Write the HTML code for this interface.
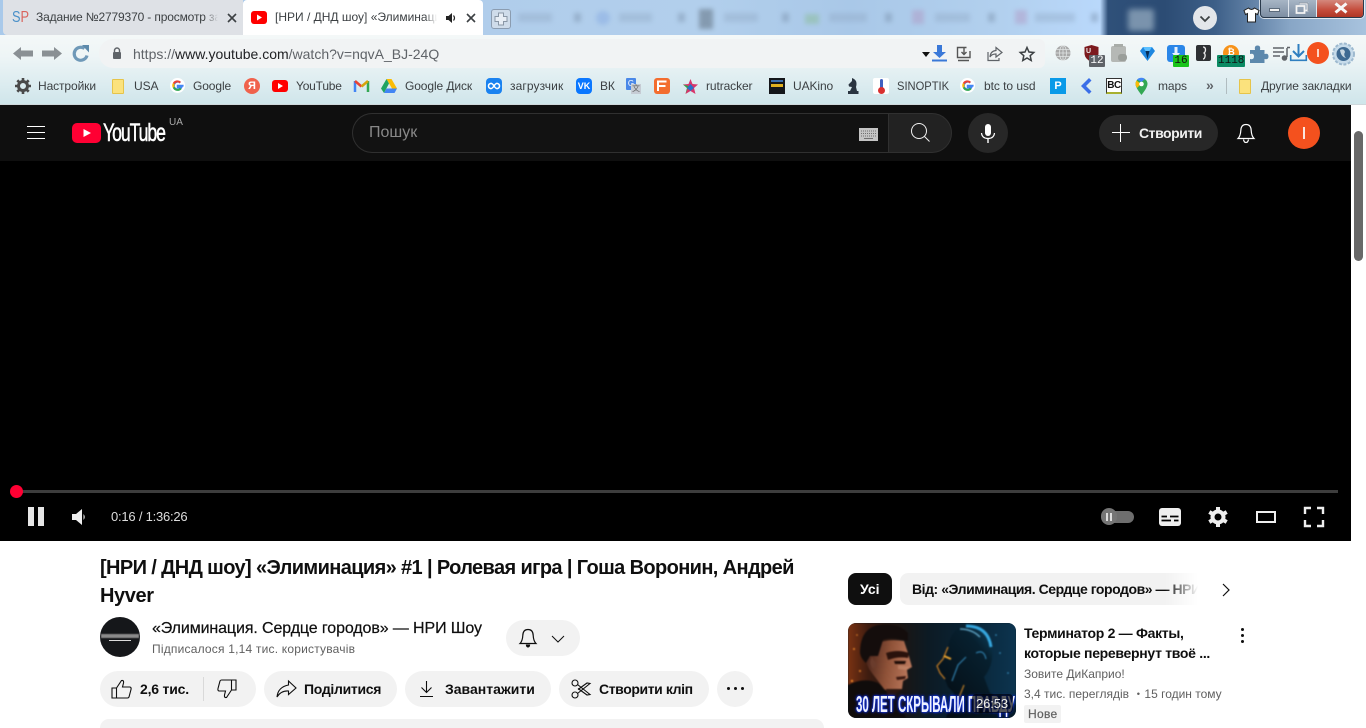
<!DOCTYPE html>
<html lang="ru"><head><meta charset="utf-8"><title>YouTube</title>
<style>
*{box-sizing:border-box}
html,body{margin:0;padding:0;width:1366px;height:728px;overflow:hidden;background:#fff;font-family:"Liberation Sans","Noto Sans CJK SC",sans-serif}
body{position:relative}
.a{position:absolute}
.t{position:absolute;white-space:nowrap}
svg{position:absolute;overflow:visible}
.bm{position:absolute;top:79px;font-size:12px;color:#3c4043;white-space:nowrap;line-height:14px;letter-spacing:-.1px}
.ic{position:absolute;top:78px;width:16px;height:16px}
.pill{position:absolute;background:#f2f2f2;border-radius:18px;height:36px;top:671px}
.lbl{position:absolute;top:681px;font-size:14px;font-weight:bold;color:#0f0f0f;white-space:nowrap;line-height:16px;letter-spacing:-.1px}
</style></head><body>

<!-- tab strip -->
<div class="a" style="left:0;top:0;width:1366px;height:35px;background:linear-gradient(90deg,#a9c9ea 0,#b0cdeb 480px,#b2cfec 700px,#a9c8e8 850px,#b2d0ee 1000px,#b9d8fb 1100px,#2f5079 1108px,#2c4c74 1165px,#3d5f88 1215px,#88a6c6 1290px,#a8c3de 1366px)"></div>
<div class="a" style="left:510px;top:9px;width:600px;height:18px;filter:blur(2.500px);opacity:.38">
 <div class="a" style="left:8px;top:4px;width:34px;height:9px;background:#8ea6c2"></div>
 <div class="a" style="left:64px;top:4px;width:7px;height:9px;background:#6e839d"></div>
 <div class="a" style="left:86px;top:2px;width:14px;height:14px;background:#7aa0e0;border-radius:7px"></div>
 <div class="a" style="left:109px;top:4px;width:33px;height:9px;background:#8ea6c2"></div>
 <div class="a" style="left:168px;top:4px;width:7px;height:9px;background:#6e839d"></div>
 <div class="a" style="left:189px;top:0;width:14px;height:20px;background:#3c4650"></div>
 <div class="a" style="left:214px;top:4px;width:34px;height:9px;background:#8ea6c2"></div>
 <div class="a" style="left:272px;top:4px;width:7px;height:9px;background:#6e839d"></div>
 <div class="a" style="left:295px;top:5px;width:14px;height:10px;background:#7fb87a"></div>
 <div class="a" style="left:319px;top:4px;width:38px;height:9px;background:#8ea6c2"></div>
 <div class="a" style="left:375px;top:4px;width:7px;height:9px;background:#6e839d"></div>
 <div class="a" style="left:402px;top:1px;width:12px;height:14px;background:#b08ab8"></div>
 <div class="a" style="left:425px;top:4px;width:35px;height:9px;background:#8ea6c2"></div>
 <div class="a" style="left:478px;top:4px;width:7px;height:9px;background:#6e839d"></div>
 <div class="a" style="left:505px;top:1px;width:12px;height:14px;background:#b08ab8"></div>
 <div class="a" style="left:525px;top:4px;width:40px;height:9px;background:#8ea6c2"></div>
 <div class="a" style="left:581px;top:4px;width:7px;height:9px;background:#6e839d"></div>
</div>
<div class="a" style="left:1128px;top:9px;width:26px;height:22px;background:#7a93ad;filter:blur(3px);border-radius:3px"></div>

<!-- tab 1 -->
<div class="a" style="left:3px;top:0;width:240px;height:35px;background:#dee1e6;border-radius:0 0 0 4px;overflow:hidden">
 <div class="t" style="left:9px;top:9px;font-size:16px;line-height:18px;color:#4a90c8;transform:scaleX(.8);transform-origin:0 0">S<span style="color:#d9635c">P</span></div>
 <div class="t" style="left:33px;top:10px;font-size:12px;line-height:15px;color:#3c4043;width:184px;overflow:hidden;letter-spacing:-.15px;-webkit-mask-image:linear-gradient(90deg,#000 168px,transparent 182px);mask-image:linear-gradient(90deg,#000 168px,transparent 182px)">Задание №2779370 - просмотр задания</div>
 <svg style="left:224px;top:13px" width="10" height="10" viewBox="0 0 10 10"><path d="M1 1 9 9M9 1 1 9" stroke="#3c4043" stroke-width="1.600"/></svg>
</div>
<!-- tab 2 -->
<div class="a" style="left:243px;top:0;width:240px;height:35px;background:#fff;border-radius:4px 4px 0 0;overflow:hidden">
 <div class="a" style="left:8px;top:11px;width:16px;height:13px;background:#f00;border-radius:3px"></div>
 <svg style="left:8px;top:11px" width="16" height="13"><path d="M6 3.500 11 6.500 6 9.500z" fill="#fff"/></svg>
 <div class="t" style="left:32px;top:10px;font-size:12px;line-height:15px;color:#3c4043;width:162px;overflow:hidden;-webkit-mask-image:linear-gradient(90deg,#000 150px,transparent 162px);mask-image:linear-gradient(90deg,#000 150px,transparent 162px)">[НРИ / ДНД шоу] «Элиминация» #1</div>
 <svg style="left:202px;top:12px" width="12" height="12" viewBox="0 0 12 12"><path d="M1 4H3.500L7 1V11L3.500 8H1z" fill="#222"/><path d="M8.500 3.500Q10.500 6 8.500 8.500" stroke="#222" fill="none" stroke-width="1.200"/></svg>
 <svg style="left:223px;top:13px" width="10" height="10" viewBox="0 0 10 10"><path d="M1 1 9 9M9 1 1 9" stroke="#3c4043" stroke-width="1.600"/></svg>
</div>
<!-- new tab -->
<div class="a" style="left:491px;top:9px;width:20px;height:20px;background:#cfdcea;border:1px solid #8b9cb0;border-radius:3px"></div>
<svg style="left:491px;top:9px" width="20" height="20"><path d="M7.500 4H12.500V7.500H16V12.500H12.500V16H7.500V12.500H4V7.500H7.500z" fill="#e8eef5" stroke="#8a97a6"/></svg>

<!-- window buttons -->
<div class="a" style="left:1260px;top:-4px;width:104px;height:22px;border:1px solid #2a3a4c;border-radius:0 0 4px 4px;background:linear-gradient(#aebccb,#7d8ea3);box-shadow:0 0 0 1px rgba(255,255,255,.7);overflow:hidden">
 <div class="a" style="left:56px;top:0;width:47px;height:22px;background:linear-gradient(#d99a90,#c44b3a 60%,#a8301f)"></div>
 <div class="a" style="left:27px;top:0;width:1px;height:22px;background:#dfe6ee"></div>
 <div class="a" style="left:55px;top:0;width:1px;height:22px;background:#dfe6ee"></div>
</div>
<div class="a" style="left:1269px;top:8px;width:11px;height:4px;background:#f2f2f2;border:1px solid #5c6b7c"></div>
<svg style="left:1295px;top:2px" width="14" height="12"><path d="M4.500 1.500H12.500V8.500H10.500M1.500 4H9.500V11H1.500z" fill="none" stroke="#f4f4f4" stroke-width="1.800"/><path d="M4 1H13V9" fill="none" stroke="#45566a" stroke-width=".5"/></svg>
<svg style="left:1334px;top:3px" width="14" height="10"><path d="M1.500 .5 12.500 9.500M12.500 .5 1.500 9.500" stroke="#f7f7f7" stroke-width="3"/></svg>
<!-- shirt -->
<svg style="left:1243px;top:7px" width="17" height="16" viewBox="0 0 17 16"><path d="M5.500 1 1 3.500 2.500 7.500 4.500 6.500V15H12.500V6.500L14.500 7.500 16 3.500 11.500 1Q8.500 4 5.500 1z" fill="#fff" stroke="#222" stroke-width="1"/></svg>
<!-- tab search -->
<div class="a" style="left:1193px;top:6px;width:24px;height:24px;border-radius:12px;background:#e3e6ea"></div>
<svg style="left:1199px;top:15px" width="12" height="8"><path d="M1.500 1.500 6 6 10.500 1.500" fill="none" stroke="#3c4043" stroke-width="1.800"/></svg>

<!-- toolbar -->
<div class="a" style="left:0;top:35px;width:1366px;height:70px;background:linear-gradient(#f4f8f8 0,#eef5f6 30%,#dcecf0 70%,#cfe5ea 100%)"></div>
<div class="a" style="left:0;top:104px;width:1366px;height:1px;background:#cfd8dc"></div>
<div class="a" style="left:99px;top:39px;width:946px;height:29px;background:#f1f3f4;border-radius:14px 6px 6px 14px"></div>
<svg style="left:13px;top:46px" width="20" height="15"><path d="M0 7.500 8 1V4.500H20V10.500H8V14z" fill="#8a9094"/></svg>
<svg style="left:42px;top:46px" width="20" height="15"><path d="M20 7.500 12 1V4.500H0V10.500H12V14z" fill="#8a9094"/></svg>
<svg style="left:72px;top:45px" width="18" height="18" viewBox="0 0 18 18"><path d="M15 10.500A6.500 6.500 0 1 1 12.500 3.500" fill="none" stroke="#6f99b8" stroke-width="3.200"/><path d="M10 0H17V7.500z" fill="#5d8aab"/></svg>
<svg style="left:112px;top:47px" width="10" height="12"><path d="M2.500 5V3.500a2.500 2.500 0 0 1 5 0V5" fill="none" stroke="#5f6368" stroke-width="1.400"/><rect x="1" y="5" width="8" height="7" rx="1" fill="#5f6368"/></svg>
<div class="t" style="left:133px;top:46px;font-size:14px;line-height:16px;color:#5f6368">https://<span style="color:#202124">www.youtube.com</span>/watch?v=nqvA_BJ-24Q</div>

<!-- address icons -->
<svg style="left:922px;top:52px" width="8" height="5"><path d="M0 0H8L4 5z" fill="#111"/></svg>
<svg style="left:931px;top:45px" width="18" height="17" viewBox="0 0 18 17"><path d="M6 0H11V7H15L8.500 13 2 7H6z" fill="#3a78d8"/><path d="M1 15.500H16" stroke="#3a78d8" stroke-width="2"/></svg>
<svg style="left:956px;top:46px" width="16" height="16" viewBox="0 0 16 16"><path d="M10.500 1.500H1.500V11.500H14V5" fill="none" stroke="#555" stroke-width="1.400"/><path d="M8 2V8M5.500 6 8 8.500 10.500 6" fill="none" stroke="#555" stroke-width="1.400"/><path d="M2 14.500H13" stroke="#555" stroke-width="1.500"/></svg>
<svg style="left:987px;top:46px" width="16" height="16" viewBox="0 0 16 16"><path d="M9 1.500 15 6.500 9 11V8Q4.500 8 3 11 3.500 5 9 4.500z" fill="none" stroke="#5f6368" stroke-width="1.200"/><path d="M1 6V14.500H12V12" fill="none" stroke="#5f6368" stroke-width="1.200"/></svg>
<svg style="left:1019px;top:46px" width="16" height="16" viewBox="0 0 16 16"><path d="M8 1.500 10 6 14.800 6.500 11.200 9.700 12.200 14.500 8 12 3.800 14.500 4.800 9.700 1.200 6.500 6 6z" fill="none" stroke="#3c4043" stroke-width="1.500"/></svg>

<!-- extensions -->
<svg style="left:1055px;top:45px" width="16" height="16" viewBox="0 0 16 16"><circle cx="8" cy="8" r="7.500" fill="#a8a8a8"/><path d="M.5 8H15.500M1.500 4.500H14.500M1.500 11.500H14.500M8 .5V15.500" stroke="#e0e4e4" stroke-width=".8"/><ellipse cx="8" cy="8" rx="3.500" ry="7.500" fill="none" stroke="#e0e4e4" stroke-width=".8"/></svg>
<svg style="left:1084px;top:45px" width="15" height="17" viewBox="0 0 15 17"><path d="M7.500 0 14.500 2V9Q14 14 7.500 17 1 14 .5 9V2z" fill="#7c1a1e"/></svg>
<div class="t" style="left:1086px;top:47px;font-size:7px;font-weight:bold;color:#eee;line-height:9px">U</div>
<div class="a" style="left:1089px;top:55px;width:16px;height:12px;background:#5f6368;color:#fff;font-size:11px;line-height:12px;text-align:center;border-radius:1px;font-family:'Liberation Mono',monospace">12</div>
<div class="a" style="left:1111px;top:46px;width:15px;height:16px;background:#b5b8b5;border-radius:2px"></div>
<div class="a" style="left:1114px;top:44px;width:9px;height:3px;background:#a8aca8"></div>
<div class="a" style="left:1118px;top:54px;width:9px;height:7px;background:#9a9e9a;border-radius:3px"></div>
<svg style="left:1140px;top:46px" width="15" height="15" viewBox="0 0 15 15"><path d="M3 1H12L15 5 7.500 15 0 5z" fill="#1e87e0"/><path d="M3 1H12L9.500 5H5.500z" fill="#5cc0ff"/><path d="M5.500 5H9.500L7.500 13z" fill="#062c55"/></svg>
<div class="a" style="left:1167px;top:45px;width:18px;height:17px;background:#2a86e8;border-radius:3px"></div>
<svg style="left:1172px;top:47px" width="8" height="12"><path d="M2.500 0H5.500V6H8L4 11 0 6H2.500z" fill="#e8f2fc"/></svg>
<div class="a" style="left:1173px;top:55px;width:16px;height:12px;background:#1ac41a;color:#111;font-size:11px;line-height:13px;text-align:center;border-radius:1px;font-family:'Liberation Mono',monospace">16</div>
<div class="a" style="left:1196px;top:45px;width:15px;height:16px;background:#2e3033;border-radius:2px"></div>
<svg style="left:1196px;top:45px" width="15" height="16"><path d="M7 2Q9.500 2 9.500 5 9.500 7 8 8 9.500 9 9 11.500 8.500 14 7 14" fill="none" stroke="#eee" stroke-width="1.300"/></svg>
<div class="a" style="left:1223px;top:45px;width:16px;height:16px;border-radius:8px;background:#f7931a;color:#fff;font-size:9px;line-height:15px;text-align:center;font-weight:bold">₿</div>
<div class="a" style="left:1217px;top:55px;width:28px;height:12px;background:#0b8a63;color:#111;font-size:11px;line-height:13px;border-radius:1px;font-family:'Liberation Mono',monospace;overflow:hidden;white-space:nowrap;padding-left:1px">11180</div>
<svg style="left:1249px;top:44px" width="20" height="20" viewBox="0 0 20 20"><path d="M1 6H6Q5 1.500 8.500 1.500 12 1.500 11 6H15.500V10Q19.500 9 19.500 12.500 19.500 16 15.500 15V19H1V15Q5 16 5 12.500 5 9 1 10z" fill="#5c88ac"/></svg>
<svg style="left:1273px;top:46px" width="17" height="15" viewBox="0 0 17 15"><path d="M0 2H11M0 6H11M0 10H7" stroke="#5f6368" stroke-width="1.500"/><path d="M14 2V11" stroke="#5f6368" stroke-width="1.500"/><path d="M14 1.500H17" stroke="#5f6368" stroke-width="1.500"/><circle cx="11.500" cy="12" r="2.800" fill="#5f6368"/></svg>
<svg style="left:1290px;top:44px" width="17" height="18" viewBox="0 0 17 18"><path d="M8.500 0V12M3 7 8.500 12.500 14 7" fill="none" stroke="#2f7fc0" stroke-width="2"/><path d="M.7 11V16.300H16.300V11" fill="none" stroke="#2f7fc0" stroke-width="1.600"/></svg>
<div class="a" style="left:1307px;top:42px;width:22px;height:22px;border-radius:11px;background:#f4511e"></div>
<div class="a" style="left:1317px;top:49px;width:2px;height:8px;background:#fcd4c4"></div>
<svg style="left:1332px;top:42px" width="23" height="24" viewBox="0 0 23 24"><circle cx="11.500" cy="12" r="10.500" fill="#c6dbea" stroke="#9db9cf" stroke-width="2" stroke-dasharray="3 1.500"/><circle cx="11.500" cy="12" r="7" fill="#3e6a92"/><path d="M8 8Q12 6 13 10 11 13 14 16 9 15 8 8z" fill="#c6d6e0"/></svg>

<!-- bookmarks -->
<svg class="ic" style="left:15px;top:78px" viewBox="0 0 16 16" width="15" height="15"><circle cx="8" cy="8" r="4.500" fill="none" stroke="#4a4a4a" stroke-width="3"/><path d="M8 0V3M8 13V16M0 8H3M13 8H16M2.300 2.300 4.400 4.400M11.600 11.600 13.700 13.700M13.700 2.300 11.600 4.400M4.400 11.600 2.300 13.700" stroke="#4a4a4a" stroke-width="2.600"/></svg>
<div class="bm" style="left:38px">Настройки</div>
<div class="a" style="left:112px;top:79px;width:12px;height:15px;background:#fbe27d;border:1px solid #e6c44a;border-radius:1px"></div>
<div class="bm" style="left:134px">USA</div>
<div class="a" style="left:170px;top:78px;width:15px;height:15px;border-radius:8px;background:#fff"></div>
<svg style="left:170px;top:78px" width="15" height="15" viewBox="0 0 16 16"><path d="M14.500 8.200H8.200V10H12.200A4.200 4.200 0 1 1 11 4.900" fill="none" stroke="#4285f4" stroke-width="2"/><path d="M11 4.900A4.400 4.400 0 0 0 4 6" fill="none" stroke="#ea4335" stroke-width="2.200"/><path d="M4 6A4.400 4.400 0 0 0 4 10" fill="none" stroke="#fbbc05" stroke-width="2.200"/><path d="M4 10A4.400 4.400 0 0 0 11.500 11" fill="none" stroke="#34a853" stroke-width="2.200"/></svg>
<div class="bm" style="left:193px">Google</div>
<div class="a" style="left:244px;top:78px;width:16px;height:16px;border-radius:8px;background:#f0624c;color:#fff;font-size:11px;font-weight:bold;line-height:16px;text-align:center">Я</div>
<div class="a" style="left:272px;top:80px;width:16px;height:12px;background:#f00;border-radius:3px"></div>
<svg style="left:272px;top:80px" width="16" height="12"><path d="M6 3 11 6 6 9z" fill="#fff"/></svg>
<div class="bm" style="left:296px;letter-spacing:-.2px">YouTube</div>
<svg style="left:354px;top:80px" width="15" height="12" viewBox="0 0 15 12"><path d="M1 1V12" stroke="#4285f4" stroke-width="2.500"/><path d="M14 1V12" stroke="#34a853" stroke-width="2.500"/><path d="M1 1 7.500 6.500" stroke="#ea4335" stroke-width="2.500"/><path d="M14 1 7.500 6.500" stroke="#d8a30c" stroke-width="2.500"/></svg>
<svg style="left:381px;top:79px" width="16" height="14" viewBox="0 0 16 14"><path d="M5.500 0H10.500L16 9.500H11z" fill="#fbbc05"/><path d="M5.500 0 8 4.500 3 14 0 9.500z" fill="#1fa463"/><path d="M3 14 5.500 9.500H16L13.500 14z" fill="#4285f4"/></svg>
<div class="bm" style="left:405px">Google Диск</div>
<div class="a" style="left:486px;top:78px;width:16px;height:16px;background:#1a82f0;border-radius:4px"></div>
<svg style="left:486px;top:78px" width="16" height="16"><path d="M8 8Q6 5 4.500 5.500 2.500 6 2.500 8 2.500 10 4.500 10.500 6 11 8 8 10 5 11.500 5.500 13.500 6 13.500 8 13.500 10 11.500 10.500 10 11 8 8z" fill="none" stroke="#fff" stroke-width="1.500"/></svg>
<div class="bm" style="left:510px;letter-spacing:.1px">загрузчик</div>
<div class="a" style="left:576px;top:78px;width:16px;height:16px;background:#0a77ff;border-radius:4px;color:#fff;font-size:9px;font-weight:bold;line-height:16px;text-align:center">VK</div>
<div class="bm" style="left:600px">ВК</div>
<div class="a" style="left:626px;top:78px;width:10px;height:12px;background:#4a88e8;color:#fff;font-size:8px;line-height:12px;text-align:center;border-radius:1px">G</div>
<div class="a" style="left:631px;top:84px;width:10px;height:10px;background:#c6ccd4;color:#666;font-size:8px;line-height:10px;text-align:center">文</div>
<div class="a" style="left:654px;top:78px;width:16px;height:16px;background:#f36d2f;border-radius:3px"></div>
<svg style="left:654px;top:78px" width="16" height="16"><path d="M4 13V3.500H12.500M4 8H11.500" fill="none" stroke="#fff" stroke-width="2"/></svg>
<svg style="left:683px;top:79px" width="15" height="15" viewBox="0 0 15 15"><path d="M7.500 0 9.500 5 15 5.500 11 9 12.500 15 7.500 12 2.500 15 4 9 0 5.500 5.500 5z" fill="#d8346a"/><path d="M0 5.500 5.500 7 2.500 15 4 9z" fill="#2aa84a"/><path d="M7.500 5 11 9 7.500 12 4 9z" fill="#2a6ec8"/></svg>
<div class="bm" style="left:706px">rutracker</div>
<div class="a" style="left:769px;top:78px;width:16px;height:16px;background:#14161a"></div>
<div class="a" style="left:771px;top:84px;width:12px;height:3px;background:#e0b020"></div>
<div class="a" style="left:771px;top:80px;width:12px;height:2px;background:#3b6fb0"></div>
<div class="bm" style="left:793px">UAKino</div>
<svg style="left:847px;top:78px" width="12" height="16" viewBox="0 0 12 16"><path d="M5 0Q11 2 9 9L10 13H11.500V16H1V13H3L5 9 2 8.500 1.500 6.500 5 3z" fill="#2a3440"/></svg>
<div class="a" style="left:873px;top:78px;width:16px;height:16px;background:#fff;border-radius:2px"></div>
<div class="a" style="left:880px;top:79px;width:3px;height:10px;background:#4060c0;border-radius:2px"></div>
<div class="a" style="left:878px;top:87px;width:7px;height:7px;background:#d83030;border-radius:4px"></div>
<div class="bm" style="left:897px;letter-spacing:0;transform:scaleX(.93);transform-origin:0 0">SINOPTIK</div>
<div class="a" style="left:960px;top:78px;width:15px;height:15px;border-radius:8px;background:#fff"></div>
<svg style="left:960px;top:78px" width="15" height="15" viewBox="0 0 16 16"><path d="M14.500 8.200H8.200V10H12.200A4.200 4.200 0 1 1 11 4.900" fill="none" stroke="#4285f4" stroke-width="2"/><path d="M11 4.900A4.400 4.400 0 0 0 4 6" fill="none" stroke="#ea4335" stroke-width="2.200"/><path d="M4 6A4.400 4.400 0 0 0 4 10" fill="none" stroke="#fbbc05" stroke-width="2.200"/><path d="M4 10A4.400 4.400 0 0 0 11.500 11" fill="none" stroke="#34a853" stroke-width="2.200"/></svg>
<div class="bm" style="left:984px;letter-spacing:-.05px">btc to usd</div>
<div class="a" style="left:1050px;top:78px;width:16px;height:16px;background:#0a9ae8;color:#fff;font-size:11px;font-weight:bold;line-height:16px;text-align:center">P</div>
<svg style="left:1080px;top:78px" width="12" height="16"><path d="M9 0 1 8 9 16 11.500 13.500 6 8 11.500 2.500z" fill="#3a6ee8"/></svg>
<div class="a" style="left:1106px;top:78px;width:16px;height:16px;background:#fff;border:1px solid #333;border-bottom:2px solid #a8b030;color:#111;font-size:10px;font-weight:bold;line-height:13px;text-align:center;letter-spacing:-.5px">BC</div>
<svg style="left:1135px;top:78px" width="13" height="17" viewBox="0 0 13 17"><path d="M6.500 0A6 6 0 0 1 12.500 6Q12.500 9.500 6.500 17 .5 9.500 .5 6A6 6 0 0 1 6.500 0z" fill="#34a853"/><path d="M1.500 2.500 6 6 2 10Q.5 7.500 .5 6 .5 4 1.500 2.500z" fill="#fbbc05"/><path d="M2 1.500A6 6 0 0 1 10 1L6.500 4z" fill="#4285f4"/><circle cx="6.500" cy="6" r="2.300" fill="#fff"/></svg>
<div class="bm" style="left:1158px">maps</div>
<div class="t" style="left:1206px;top:78px;font-size:14px;line-height:15px;color:#5f6368;font-weight:bold">»</div>
<div class="a" style="left:1226px;top:78px;width:1px;height:16px;background:#b0bcc0"></div>
<div class="a" style="left:1239px;top:79px;width:12px;height:15px;background:#fbe27d;border:1px solid #e6c44a;border-radius:1px"></div>
<div class="bm" style="left:1261px">Другие закладки</div>

<!-- page white -->
<div class="a" style="left:0;top:105px;width:1351px;height:623px;background:#fff"></div>

<!-- yt header -->
<div class="a" style="left:0;top:105px;width:1351px;height:56px;background:#0f0f0f"></div>
<div class="a" style="left:27px;top:126px;width:18px;height:1px;background:#fff"></div>
<div class="a" style="left:27px;top:132px;width:18px;height:1px;background:#fff"></div>
<div class="a" style="left:27px;top:138px;width:18px;height:1px;background:#fff"></div>
<div class="a" style="left:72px;top:123px;width:29px;height:20px;background:#ff0033;border-radius:5px"></div>
<svg style="left:72px;top:123px" width="29" height="20"><path d="M11.500 6 19 10 11.500 14z" fill="#fff"/></svg>
<div class="t" style="left:103px;top:119px;font-size:25px;line-height:28px;color:#fff;letter-spacing:-1.500px;transform:scaleX(.705);transform-origin:0 0;font-weight:normal;-webkit-text-stroke:.5px #fff">YouTube</div>
<div class="t" style="left:169px;top:117px;font-size:10px;line-height:12px;color:#aaa">UA</div>

<div class="a" style="left:352px;top:113px;width:537px;height:40px;background:#121212;border:1px solid #303030;border-right:0;border-radius:20px 0 0 20px"></div>
<div class="t" style="left:369px;top:123px;font-size:16px;line-height:19px;color:#888">Пошук</div>
<div class="a" style="left:859px;top:128px;width:19px;height:13px;background:#c4c4c4"></div>
<svg style="left:859px;top:128px" width="19" height="13"><path d="M2 3H17M2 5.500H17M2 8H17" stroke="#6e6e6e" stroke-width="1" stroke-dasharray="1 1"/><path d="M5 10.500H14" stroke="#6e6e6e"/></svg>
<div class="a" style="left:888px;top:113px;width:64px;height:40px;background:#222;border:1px solid #303030;border-radius:0 20px 20px 0"></div>
<svg style="left:910px;top:122px" width="20" height="20" viewBox="0 0 20 20"><circle cx="9" cy="9" r="7.500" fill="none" stroke="#f1f1f1" stroke-width="1"/><path d="M14.500 14.500 19.500 19.500" stroke="#f1f1f1" stroke-width="1"/></svg>
<div class="a" style="left:968px;top:113px;width:40px;height:40px;border-radius:20px;background:#272727"></div>
<svg style="left:980px;top:124px" width="16" height="20" viewBox="0 0 16 20"><rect x="5" y="0" width="6" height="12" rx="3" fill="#fff"/><path d="M1.500 9Q2 14.500 8 14.500 14 14.500 14.500 9" fill="none" stroke="#fff" stroke-width="1.200"/><path d="M8 14.500V19" stroke="#fff" stroke-width="1.400"/></svg>
<div class="a" style="left:1099px;top:115px;width:119px;height:36px;border-radius:18px;background:#272727"></div>
<svg style="left:1112px;top:124px" width="18" height="18"><path d="M8.500 0V18M0 8.500H18" stroke="#fff" stroke-width="1"/></svg>
<div class="t" style="left:1139px;top:125px;font-size:14px;font-weight:bold;line-height:16px;color:#f1f1f1;letter-spacing:-.45px">Створити</div>
<svg style="left:1237px;top:123px" width="18" height="21" viewBox="0 0 18 21"><path d="M9 1.500Q14 1.500 14.200 7.500 14.500 13 17 15.500H1Q3.500 13 3.800 7.500 4 1.500 9 1.500z" fill="none" stroke="#fff" stroke-width="1.200"/><path d="M6.500 16.500Q7 19.500 9 19.500 11 19.500 11.500 16.500" fill="none" stroke="#fff" stroke-width="1.200"/></svg>
<div class="a" style="left:1288px;top:117px;width:32px;height:32px;border-radius:16px;background:#f4511e"></div>
<div class="a" style="left:1303px;top:127px;width:2px;height:12px;background:#fbe6de"></div>

<!-- player -->
<div class="a" style="left:0;top:161px;width:1351px;height:380px;background:#000"></div>
<div class="a" style="left:16px;top:490px;width:1322px;height:3px;background:#3d3d3d"></div>
<div class="a" style="left:10px;top:485px;width:13px;height:13px;border-radius:7px;background:#f03"></div>
<div class="a" style="left:28px;top:507px;width:6px;height:19px;background:#e6e6e6"></div>
<div class="a" style="left:38px;top:507px;width:6px;height:19px;background:#e6e6e6"></div>
<svg style="left:72px;top:508px" width="15" height="18" viewBox="0 0 15 18"><path d="M0 6H4L10 1V17L4 12H0z" fill="#eee"/><path d="M11.500 6Q14 9 11.500 12" fill="#eee"/></svg>
<div class="t" style="left:111px;top:509px;font-size:13px;line-height:15px;color:#ddd;letter-spacing:-.22px">0:16 / 1:36:26</div>
<div class="a" style="left:1102px;top:511px;width:32px;height:12px;border-radius:6px;background:#6e6e6e"></div>
<div class="a" style="left:1101px;top:508px;width:16px;height:17px;border-radius:9px;background:#757575"></div>
<div class="a" style="left:1106px;top:513px;width:2px;height:8px;background:#ddd"></div>
<div class="a" style="left:1110px;top:513px;width:2px;height:8px;background:#ddd"></div>
<div class="a" style="left:1159px;top:508px;width:22px;height:18px;background:#eee;border-radius:3px"></div>
<svg style="left:1159px;top:508px" width="22" height="18"><path d="M2.500 8.500H8M11 8.500H19.500M2.500 12.500H12M15 12.500H19.500" stroke="#000" stroke-width="1.800"/></svg>
<svg style="left:1208px;top:507px" width="20" height="20" viewBox="0 0 20 20"><circle cx="10" cy="10" r="5.500" fill="none" stroke="#eee" stroke-width="4"/><path d="M10 0V4M10 16V20M1.300 5 4.800 7M15.200 13 18.700 15M1.300 15 4.800 13M15.200 7 18.700 5" stroke="#eee" stroke-width="4"/></svg>
<div class="a" style="left:1256px;top:511px;width:20px;height:12px;border:2px solid #eee"></div>
<svg style="left:1304px;top:507px" width="20" height="20"><path d="M1 7V1H7M13 1H19V7M19 13V19H13M7 19H1V13" fill="none" stroke="#eee" stroke-width="2.400"/></svg>

<!-- scrollbar -->
<div class="a" style="left:1351px;top:105px;width:15px;height:623px;background:#fff"></div>
<div class="a" style="left:1354px;top:131px;width:9px;height:130px;background:#686868;border-radius:5px"></div>

<!-- title -->
<div class="t" style="left:100px;top:554px;font-size:20px;font-weight:bold;line-height:28px;color:#0f0f0f;letter-spacing:-.62px">[НРИ / ДНД шоу] «Элиминация» #1 | Ролевая игра | Гоша Воронин, Андрей</div>
<div class="t" style="left:100px;top:582px;font-size:20px;font-weight:bold;line-height:28px;color:#0f0f0f;letter-spacing:-.4px">Hyver</div>

<!-- channel -->
<div class="a" style="left:100px;top:617px;width:40px;height:40px;border-radius:20px;background:#15171a;overflow:hidden">
 <div class="a" style="left:1px;top:17px;width:38px;height:4px;background:#8a8a8a;filter:blur(.5px)"></div>
 <div class="a" style="left:9px;top:23px;width:22px;height:1px;background:#ddd"></div>
</div>
<div class="t" style="left:152px;top:619px;font-size:16px;line-height:20px;color:#0f0f0f;letter-spacing:-.11px;-webkit-text-stroke:.2px #0f0f0f">«Элиминация. Сердце городов» — НРИ Шоу</div>
<div class="t" style="left:152px;top:641px;font-size:12px;line-height:16px;color:#606060;letter-spacing:.2px">Підписалося 1,14 тис. користувачів</div>
<div class="pill" style="left:506px;top:620px;width:74px"></div>
<svg style="left:519px;top:628px" width="18" height="21" viewBox="0 0 18 21"><path d="M9 1.500Q14 1.500 14.200 7.500 14.500 13 17 15.500H1Q3.500 13 3.800 7.500 4 1.500 9 1.500z" fill="none" stroke="#0f0f0f" stroke-width="1.200"/><path d="M6.800 16.500Q7 19.500 9 19.500 11 19.500 11.200 16.500z" fill="#0f0f0f"/></svg>
<svg style="left:551px;top:635px" width="14" height="8"><path d="M1 1 7 7 13 1" fill="none" stroke="#0f0f0f" stroke-width="1"/></svg>

<!-- actions -->
<div class="pill" style="left:100px;width:156px"></div>
<div class="a" style="left:203px;top:677px;width:1px;height:24px;background:#d9d9d9"></div>
<svg style="left:111px;top:679px" width="21" height="20" viewBox="0 0 21 20"><path d="M1 9H5.500V19H1zM5.500 9 10.500 1.500Q13 1 12.500 4L11.500 8H19Q20.500 8.500 20 10.500L18 18Q17.500 19 16.500 19H5.500" fill="none" stroke="#0f0f0f" stroke-width="1.100"/></svg>
<div class="lbl" style="left:140px;letter-spacing:-.2px">2,6 тис.</div>
<svg style="left:217px;top:679px" width="20" height="20" viewBox="0 0 20 20"><path d="M19 11H14.500V1H19zM14.500 11 9.500 18.500Q7 19 7.500 16L8.500 12H2Q.5 11.500 1 9.500L3 2Q3.500 1 4.500 1H14.500" fill="none" stroke="#0f0f0f" stroke-width="1.100"/></svg>
<div class="pill" style="left:264px;width:133px"></div>
<svg style="left:276px;top:680px" width="21" height="18" viewBox="0 0 21 18"><path d="M12.500 1 20 8 12.500 14.500V11Q5 10.500 1 17 2 7 12.500 5z" fill="none" stroke="#0f0f0f" stroke-width="1.100"/></svg>
<div class="lbl" style="left:304px;letter-spacing:-.3px">Поділитися</div>
<div class="pill" style="left:405px;width:146px"></div>
<svg style="left:420px;top:681px" width="13" height="16" viewBox="0 0 13 16"><path d="M6.500 0V11M1.500 6.500 6.500 11.500 11.500 6.500M0 15.500H13" fill="none" stroke="#0f0f0f" stroke-width="1.100"/></svg>
<div class="lbl" style="left:445px;letter-spacing:0">Завантажити</div>
<div class="pill" style="left:559px;width:150px"></div>
<svg style="left:571px;top:679px" width="20" height="20" viewBox="0 0 20 20"><circle cx="4" cy="4" r="3" fill="none" stroke="#0f0f0f" stroke-width="1.100"/><circle cx="4" cy="16" r="3" fill="none" stroke="#0f0f0f" stroke-width="1.100"/><path d="M6.500 5.500 19 15.500 16 16 7 9.500M6.500 14.500 19 4.500 16 4 7 10.500" fill="none" stroke="#0f0f0f" stroke-width="1.100"/></svg>
<div class="lbl" style="left:599px;letter-spacing:-.4px">Створити кліп</div>
<div class="pill" style="left:717px;width:36px"></div>
<div class="a" style="left:727px;top:687px;width:3px;height:3px;border-radius:2px;background:#0f0f0f"></div>
<div class="a" style="left:734px;top:687px;width:3px;height:3px;border-radius:2px;background:#0f0f0f"></div>
<div class="a" style="left:741px;top:687px;width:3px;height:3px;border-radius:2px;background:#0f0f0f"></div>

<!-- description top -->
<div class="a" style="left:100px;top:719px;width:724px;height:9px;background:#f2f2f2;border-radius:12px 12px 0 0"></div>

<!-- sidebar chips -->
<div class="a" style="left:848px;top:573px;width:44px;height:32px;background:#0f0f0f;border-radius:8px"></div>
<div class="t" style="left:860px;top:581px;font-size:14px;font-weight:bold;line-height:16px;color:#fff">Усі</div>
<div class="a" style="left:900px;top:573px;width:300px;height:32px;background:#f2f2f2;border-radius:8px 0 0 8px;overflow:hidden;-webkit-mask-image:linear-gradient(90deg,#000 265px,transparent 298px);mask-image:linear-gradient(90deg,#000 265px,transparent 298px)">
 <div class="t" style="left:12px;top:8px;font-size:14px;font-weight:bold;line-height:16px;color:#0f0f0f;letter-spacing:-.45px">Від: «Элиминация. Сердце городов» — НРИ Шоу</div>
</div>
<svg style="left:1221px;top:583px" width="10" height="14"><path d="M2 1 8 7 2 13" fill="none" stroke="#0f0f0f" stroke-width="1.200"/></svg>

<!-- thumbnail -->
<div class="a" style="left:848px;top:623px;width:168px;height:95px;border-radius:8px;overflow:hidden;background:#0a1c2a">
 <svg style="left:0;top:0;filter:blur(.8px)" width="168" height="95" viewBox="0 0 168 95">
  <defs>
   <linearGradient id="bg" x1="0" x2="1" y1="0" y2="0"><stop offset="0" stop-color="#7a3212"/><stop offset=".12" stop-color="#3e1c10"/><stop offset=".3" stop-color="#1c1512"/><stop offset=".48" stop-color="#0c1a24"/><stop offset=".72" stop-color="#092436"/><stop offset="1" stop-color="#0c344f"/></linearGradient>
   <linearGradient id="skin" x1="0" x2="1" y1="0" y2=".2"><stop offset="0" stop-color="#3e1d16"/><stop offset=".55" stop-color="#8f5238"/><stop offset="1" stop-color="#b8765a"/></linearGradient>
   <linearGradient id="rob" x1="1" x2="0" y1="0" y2="1"><stop offset="0" stop-color="#14638f"/><stop offset=".35" stop-color="#07202f"/><stop offset="1" stop-color="#03080d"/></linearGradient>
  </defs>
  <rect width="168" height="95" fill="url(#bg)"/>
  <g fill="#e8842a"><circle cx="6" cy="26" r="1"/><circle cx="12" cy="48" r="1"/><circle cx="4" cy="58" r="1.200"/><circle cx="9" cy="12" r=".8"/></g>
  <g fill="#3f9cd0"><circle cx="152" cy="30" r=".8"/><circle cx="160" cy="50" r=".8"/><circle cx="148" cy="12" r=".8"/></g>
  <path d="M0 62Q16 54 30 60L48 74 58 95H0z" fill="#100c0b"/>
  <path d="M18 28Q32 14 56 18L60 30 64 44 59 47 60 55 55 58 54 66Q44 72 36 66L24 50Q16 40 18 28z" fill="url(#skin)"/>
  <path d="M12 30Q12 6 30 2 50 -1 60 10L60 18Q44 13 35 17L30 33 22 33 18 40Q13 36 12 30z" fill="#140d0c"/>
  <path d="M38 30Q50 26 61 30L60 35Q50 33 40 37z" fill="#2a120c"/>
  <path d="M46 38H58L57 41H47z" fill="#1f0d08"/>
  <path d="M48 54 58 53 57 56 49 57z" fill="#3a1810"/>
  <path d="M50 42 62 44 58 47 50 46z" fill="#c68c70" opacity=".6"/>
  <path d="M24 34Q20 40 25 46L29 42z" fill="#6a3c2c"/>
  <path d="M38 66 54 66 40 76z" fill="#2a1610"/>
  <path d="M100 24Q104 2 122 2 142 3 144 24 146 42 136 54L142 70 168 82V95H98L106 70 100 64 96 54 92 50 89 43 95 36z" fill="url(#rob)"/>
  <path d="M118 3Q140 3 143 24" fill="none" stroke="#3bb4f0" stroke-width="3" opacity=".9"/>
  <path d="M112 6Q124 6 132 14" fill="none" stroke="#7fd0f5" stroke-width="1.500" opacity=".7"/>
  <path d="M100 24 95 36 89 43 92 50 97 56" fill="none" stroke="#c07a24" stroke-width="1.300"/>
  <path d="M96 33 103 36" stroke="#f0a830" stroke-width="2"/>
  <path d="M104 58 110 42 118 34M128 30Q136 26 138 36" fill="none" stroke="#2e7ca8" stroke-width="1.200"/>
  <path d="M116 62 108 82" stroke="#c08028" stroke-width="1.200"/>
 </svg>
 <div class="t" style="left:8px;top:71px;font-size:23px;font-weight:bold;line-height:20px;color:#eef2ff;text-shadow:0 0 2px #1030e0,0 0 3px #1030e0,0 0 5px #1030e0;transform:scaleX(.5);transform-origin:0 0">30 ЛЕТ СКРЫВАЛИ ПРАВДУ</div>
 <div class="a" style="left:124px;top:71px;width:41px;height:19px;background:rgba(0,0,0,.65);border-radius:4px"></div>
 <div class="t" style="left:128px;top:73px;font-size:13px;line-height:15px;color:#eee;letter-spacing:-.1px">26:53</div>
</div>

<!-- sidebar text -->
<div class="t" style="left:1024px;top:623px;font-size:14px;font-weight:bold;line-height:20px;color:#0f0f0f;letter-spacing:-.3px">Терминатор 2 — Факты,</div>
<div class="t" style="left:1024px;top:643px;font-size:14px;font-weight:bold;line-height:20px;color:#0f0f0f;letter-spacing:-.3px">которые перевернут твоё ...</div>
<div class="t" style="left:1024px;top:666px;font-size:12px;line-height:16px;color:#606060">Зовите ДиКаприо!</div>
<div class="t" style="left:1024px;top:686px;font-size:12px;line-height:16px;color:#606060">3,4 тис. переглядів  ・15 годин тому</div>
<div class="a" style="left:1024px;top:705px;width:37px;height:18px;background:#f2f2f2;border-radius:2px"></div>
<div class="t" style="left:1028px;top:706px;font-size:12px;line-height:16px;color:#606060;letter-spacing:.3px;-webkit-text-stroke:.2px #606060">Нове</div>
<div class="a" style="left:1241px;top:628px;width:3px;height:3px;border-radius:2px;background:#0f0f0f"></div>
<div class="a" style="left:1241px;top:634px;width:3px;height:3px;border-radius:2px;background:#0f0f0f"></div>
<div class="a" style="left:1241px;top:640px;width:3px;height:3px;border-radius:2px;background:#0f0f0f"></div>

</body></html>
